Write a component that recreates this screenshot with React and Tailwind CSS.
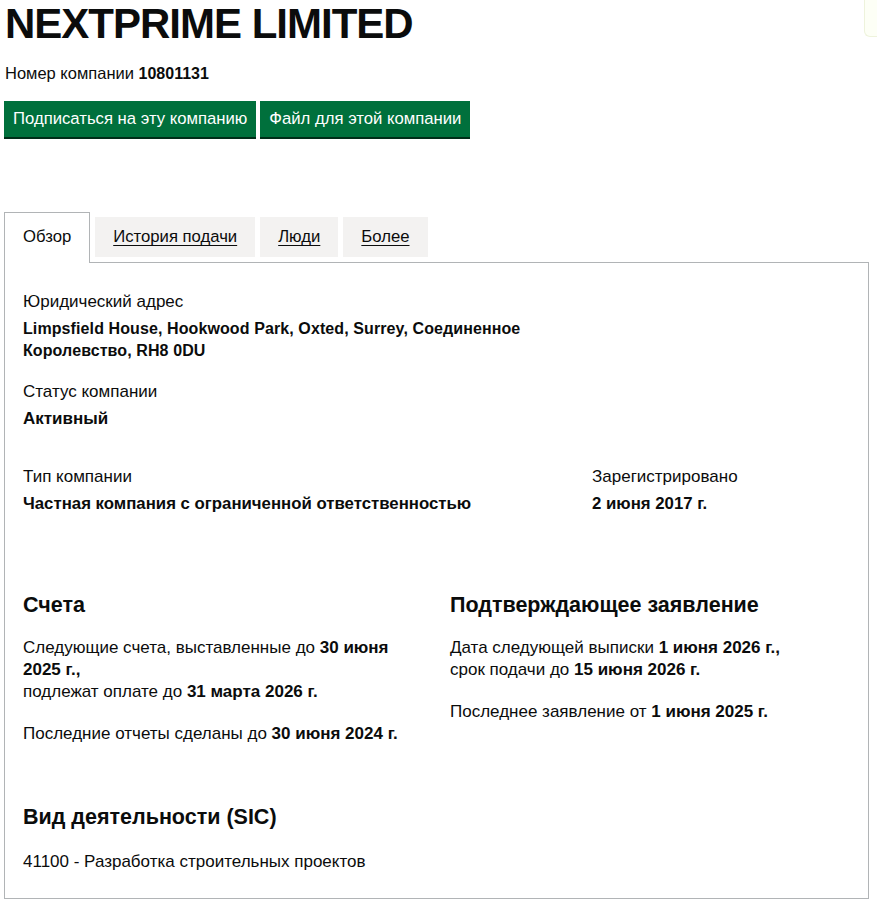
import React from 'react';

const font = { fontFamily: '"Liberation Sans", Arial, sans-serif' };

function Tab({ label, selected }) {
  if (selected) {
    return (
      <li className="relative z-10 -mb-px mr-[5px] border border-b-0 border-[#b1b4b6] bg-white px-[18px] pt-[14px] pb-[16px] text-[16.7px] leading-[20px]">
        Обзор
      </li>
    );
  }
  return (
    <li className="mt-[5px] mr-[5px] bg-[#f3f2f1] px-[18px] py-[10px] text-[16.7px] leading-[20px]">
      <a href="#" className="underline underline-offset-[3px] decoration-1 text-[#0b0c0c]">{label}</a>
    </li>
  );
}

export default function App() {
  return (
    <div className="relative min-h-[906px] bg-white pl-[4px] pr-[9px] text-[#0b0c0c]" style={font}>
      {/* остаток виджета в правом верхнем углу */}
      <div className="absolute right-0 top-0 h-[37px] w-[13px] rounded-bl-[6px] border-b border-l border-[#eef3dc] bg-[#fdfff6]"></div>

      <h1 className="pt-[2px] pl-px text-[42px] font-bold leading-[44px] tracking-[-1px]">NEXTPRIME LIMITED</h1>

      <p className="mt-[17px] pl-px text-[16.5px] leading-[20px]">
        Номер компании <strong className="text-[16px] font-bold">10801131</strong>
      </p>

      <div className="mt-[17px] flex gap-[4px]">
        <button className="h-[36px] bg-[#00703c] px-[9px] text-[16.7px] leading-[20px] text-white shadow-[0_2px_0_#002d18]">
          Подписаться на эту компанию
        </button>
        <button className="h-[36px] bg-[#00703c] px-[9px] text-[16.7px] leading-[20px] text-white shadow-[0_2px_0_#002d18]">
          Файл для этой компании
        </button>
      </div>

      <ul className="mt-[75px] flex items-start">
        <Tab label="Обзор" selected />
        <Tab label="История подачи" />
        <Tab label="Люди" />
        <Tab label="Более" />
      </ul>

      <div className="w-[865px] border border-[#b1b4b6] px-[18px] pt-[29px] pb-[26px] text-[17px]">
        <dl>
          <dt className="leading-[20px]">Юридический адрес</dt>
          <dd className="mt-[6px] w-[539px] text-[16px] font-bold leading-[22px] tracking-[0.1px]">
            Limpsfield House, Hookwood Park, Oxted, Surrey, Соединенное Королевство, RH8 0DU
          </dd>
          <dt className="mt-[20px] leading-[20px]">Статус компании</dt>
          <dd className="mt-[6px] font-bold leading-[22px]">Активный</dd>
        </dl>

        <div className="mt-[37px] flex">
          <dl className="w-[569px] shrink-0 pr-[30px]">
            <dt className="leading-[20px]">Тип компании</dt>
            <dd className="mt-[6px] text-[16.8px] font-bold leading-[22px]">Частная компания с ограниченной ответственностью</dd>
          </dl>
          <dl>
            <dt className="leading-[20px]">Зарегистрировано</dt>
            <dd className="mt-[6px] text-[16.8px] font-bold leading-[22px]">2 июня 2017 г.</dd>
          </dl>
        </div>

        <div className="mt-[75px] flex">
          <div className="w-[427px] shrink-0 pr-[30px]">
            <h2 className="text-[21.5px] font-bold leading-[30px]">Счета</h2>
            <p className="mt-[17px] leading-[22px]">
              Следующие счета, выставленные до <strong>30 июня 2025 г.,</strong>
              <br />
              подлежат оплате до <strong>31 марта 2026 г.</strong>
            </p>
            <p className="mt-[20px] leading-[22px]">
              Последние отчеты сделаны до <strong>30 июня 2024 г.</strong>
            </p>
          </div>
          <div>
            <h2 className="text-[21.5px] font-bold leading-[30px]">Подтверждающее заявление</h2>
            <p className="mt-[17px] leading-[22px]">
              Дата следующей выписки <strong>1 июня 2026 г.,</strong>
              <br />
              срок подачи до <strong>15 июня 2026 г.</strong>
            </p>
            <p className="mt-[20px] leading-[22px]">
              Последнее заявление от <strong>1 июня 2025 г.</strong>
            </p>
          </div>
        </div>

        <h2 className="mt-[57px] text-[21.5px] font-bold leading-[30px]">Вид деятельности (SIC)</h2>
        <p className="mt-[20px] leading-[20px]">41100 - Разработка строительных проектов</p>
      </div>
    </div>
  );
}
